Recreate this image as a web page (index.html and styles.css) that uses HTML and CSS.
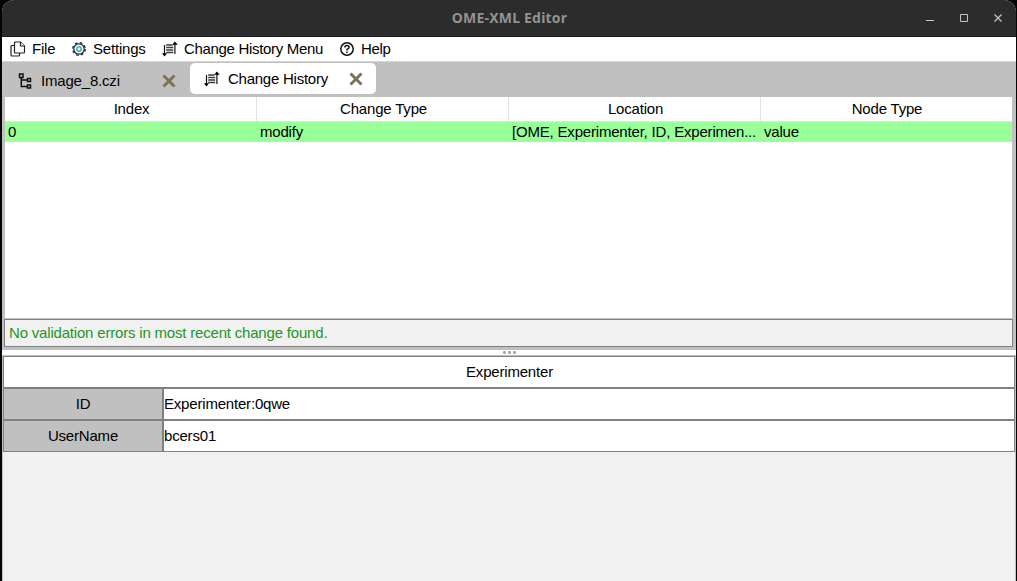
FILE: index.html
```html
<!DOCTYPE html>
<html lang="en">
<head>
<meta charset="utf-8">
<title>OME-XML Editor</title>
<link rel="stylesheet" href="styles.css">
</head>
<body>
<svg class="defs" aria-hidden="true">
  <symbol id="changes" viewBox="0 0 16 16">
    <path d="M2.500 4v10M12.900 2v11" stroke="#111" stroke-width="1.200" fill="none"/>
    <path d="M0 12.300h5L2.500 15.500zM10.200 3.700h5.600L12.900 .5z" fill="#000"/>
    <path d="M4.200 4h6.500M4.200 6.500h7M4.200 9h7M4.200 11.500h7" stroke="#3c3c3c" stroke-width="1.500"/>
  </symbol>
  <symbol id="close" viewBox="0 0 14 14">
    <path d="M1.500 1.500l11 11M12.500 1.500l-11 11" stroke="#7d7455" stroke-width="3"/>
  </symbol>
</svg>
<div class="window">
  <header class="titlebar">
    <span class="title">OME-XML Editor</span>
    <svg class="controls" width="80" height="16" viewBox="0 0 80 16" fill="none" stroke="#c4c4c4">
      <path d="M0 10.500h8"/><path d="M34.500 4.500h7v7h-7z"/><path d="M68.500 4.500l7 7M75.500 4.500l-7 7" stroke-width="1.300"/>
    </svg>
  </header>
  <nav class="menubar">
    <span class="menu file"><svg width="16" height="16" viewBox="0 0 16 16" fill="#fff" stroke="#222" stroke-width="1.200"><path d="M4 4.500H2q-1 0-1 1v8.500q0 1 1 1h6.500q1 0 1-1v-2"/><path d="M5.500 1h5l4 4v6q0 1-1 1h-8q-1 0-1-1V2q0-1 1-1z"/><path d="M10.500 1v4h4"/></svg>File</span>
    <span class="menu settings"><svg width="14" height="14" viewBox="0 0 14 14" fill="none"><circle cx="7" cy="7" r="5.200" stroke="#26343b" stroke-width="1.300"/><circle cx="7" cy="7" r="6.200" stroke="#26343b" stroke-width="1.500" stroke-dasharray="2.600 2.270"/><circle cx="7" cy="7" r="2.200" stroke="#3aaac4" stroke-width="1.500"/></svg>Settings</span>
    <span class="menu history"><svg width="16" height="16"><use href="#changes"/></svg>Change History Menu</span>
    <span class="menu help"><svg width="14" height="14" viewBox="0 0 14 14" fill="none" stroke="#111" stroke-width="1.500"><circle cx="7" cy="7" r="6.200"/><path d="M4.900 5.500q0-2 2.100-2t2.100 1.800Q9.100 6.500 7 7.400v1.100M7 9.500v1.500"/></svg>Help</span>
  </nav>
  <div class="tabs">
    <div class="tab image"><svg class="tree" width="14" height="16" viewBox="0 0 14 16" fill="none" stroke="#111" stroke-width="1.500"><path d="M1.500 1h3.500v3.500H1.500zM9.500 5.500h3v3h-3zM9.500 12h3v3h-3zM3.300 4.500v9H9.500M3.300 7H9.500"/></svg><span>Image_8.czi</span><svg class="x" width="14" height="14"><use href="#close"/></svg></div>
    <div class="tab active"><svg width="16" height="16"><use href="#changes"/></svg><span>Change History</span><svg class="x" width="14" height="14"><use href="#close"/></svg></div>
  </div>
  <section class="changes">
    <div class="table">
      <div class="row head"><span>Index</span><span>Change Type</span><span>Location</span><span>Node Type</span></div>
      <div class="row data"><span>0</span><span>modify</span><span>[OME, Experimenter, ID, Experimen...</span><span>value</span></div>
    </div>
    <div class="validation">No validation errors in most recent change found.</div>
  </section>
  <div class="divider"><i></i><i></i><i></i></div>
  <section class="details">
    <div class="heading">Experimenter</div>
    <div class="field"><span class="name">ID</span><span class="value">Experimenter:0qwe</span></div>
    <div class="field"><span class="name">UserName</span><span class="value">bcers01</span></div>
  </section>
</div>
</body>
</html>
```
FILE: styles.css
```css
* { box-sizing: border-box; }
body { margin: 0; background: #050505; overflow: hidden; }
.defs { display: none; }
svg { flex: none; display: block; }
.window {
  height: 581px; margin: 0 1px 0 2px; display: flex; flex-direction: column;
  background: #f1f1f1; border-radius: 12px 12px 0 0; overflow: hidden;
  font: 15px/20px "Liberation Sans", Arial, sans-serif; letter-spacing: -0.19px; color: #000; white-space: nowrap;
}
.titlebar {
  height: 37px; flex: none; display: grid; grid-template-columns: 1fr auto 1fr; align-items: center;
  background: #2c2c2c; border-bottom: 1px solid #191919;
}
.title { grid-column: 2; color: #929292; font: bold 14px/20px "Noto Sans", sans-serif; letter-spacing: 0.2px; padding-left: 1px; }
.controls { justify-self: end; margin-right: 10px; }
.menubar { height: 25px; flex: none; display: flex; align-items: center; background: #fff; border-bottom: 1px solid #d5d5d5; padding-left: 8px; }
.menu { display: flex; align-items: center; gap: 6px; }
.file { width: 62px; }
.settings { width: 90px; gap: 7px; }
.history { width: 178px; letter-spacing: -0.32px; }
.help { gap: 7px; letter-spacing: -0.3px; }
.tabs { height: 35px; flex: none; display: flex; background: #c0c0c0; padding-top: 1px; }
.tab { height: 31px; display: flex; align-items: center; }
.image { width: 188px; padding: 4px 14px 0 16px; }
.image span { margin-left: 9px; }
.active { width: 186px; background: #fff; border-radius: 5px; padding: 0 13px 0 14px; }
.active span { margin-left: 8px; letter-spacing: -0.25px; }
.x { margin-left: auto; }
.changes { height: 253px; flex: none; background: #c0c0c0; padding: 0 3px 3px 2px; }
.table { height: 221px; margin: 0 1px 1px; background: #fff; }
.row { display: grid; grid-template-columns: repeat(4, 252px); overflow: hidden; }
.head { height: 25px; line-height: 24px; text-align: center; border-bottom: 1px solid #e2e2e2; }
.head span { border-right: 1px solid #e2e2e2; padding-left: 2px; }
.head span:last-child { border-right: 0; padding-left: 0; }
.data { height: 20px; background: #99ff99; }
.data span { padding-left: 3px; }
.validation { height: 28px; border: 1px solid #808080; background: #f1f1f1; color: #1f961f; padding-left: 4px; line-height: 26px; }
.divider { height: 6px; flex: none; background: #fff; border-bottom: 1px solid #c0c0c0; display: flex; justify-content: center; align-items: center; gap: 2px; }
.divider i { width: 3px; height: 3px; background: #a8a8a8; border-radius: 1px; }
.details { flex: 1; border: solid #c0c0c0; border-width: 0 1px; }
.heading, .name, .value { height: 32px; line-height: 30px; border: 1px solid #808080; }
.heading { text-align: center; background: #fff; padding-left: 1px; }
.field { display: flex; }
.name { width: 160px; background: #c0c0c0; text-align: center; }
.value { flex: 1; background: #fff; }
```
